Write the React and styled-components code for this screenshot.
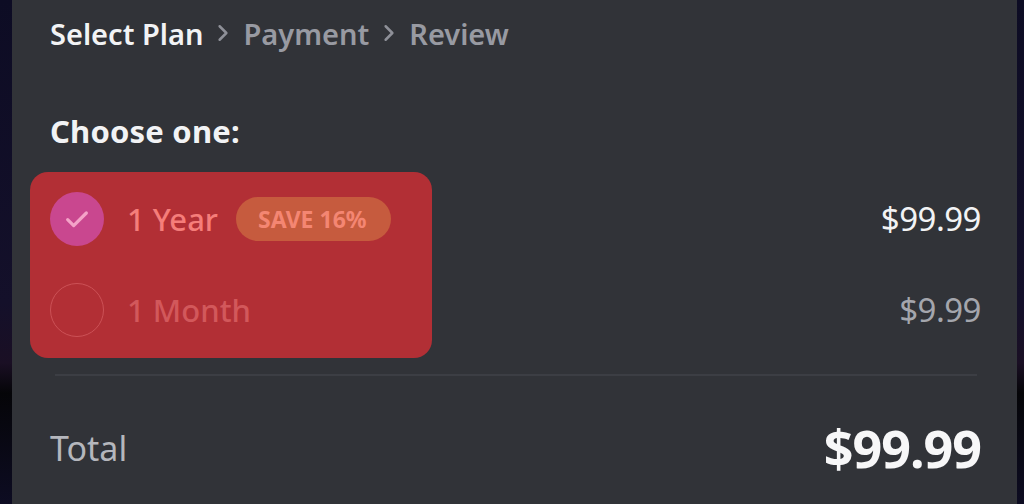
import React, { useState } from 'react';
import styled, { createGlobalStyle } from 'styled-components';

const GlobalStyle = createGlobalStyle`
  html, body {
    margin: 0;
    padding: 0;
    background: #0b0a1c;
  }
  body {
    font-family: 'Noto Sans', 'Open Sans', sans-serif;
  }
`

const Backdrop = styled.div`
  width: 1024px;
  height: 504px;
  display: flex;
  background: linear-gradient(180deg, #0d0c24 0%, #14102a 60%, #1a0f24 72%, #050508 78%, #0d0c22 100%);
  overflow: hidden;
`

const Panel = styled.section`
  width: 1005px;
  margin-left: 12px;
  background: #313338;
  padding: 13px 36px 0 38px;
  box-sizing: border-box;
  display: flex;
  flex-direction: column;
`

const Crumbs = styled.nav`
  display: flex;
  align-items: center;
  gap: 11px;
  height: 40px;
  font-size: 29px;
  font-weight: 600;
`

const Crumb = styled.span`
  color: ${p => (p.active ? '#f2f3f5' : '#989aa2')};
`

const Chevron = styled.svg`
  width: 18px;
  height: 18px;
`

const Heading = styled.h2`
  margin: 60px 0 0 0;
  font-size: 31px;
  font-weight: 700;
  color: #f2f3f5;
  line-height: 36px;
  letter-spacing: 0.2px;
`

const Options = styled.div`
  display: flex;
  flex-direction: column;
  margin-top: 24px;
  position: relative;
`

const Highlight = styled.div`
  position: absolute;
  left: -20px;
  top: -1px;
  width: 402px;
  height: 186px;
  border-radius: 18px;
  background: #b22f35;
  pointer-events: none;
`

const Option = styled.label`
  position: relative;
  display: flex;
  align-items: center;
  height: 91px;
  cursor: pointer;
`

const Radio = styled.span`
  width: 54px;
  height: 54px;
  border-radius: 50%;
  box-sizing: border-box;
  display: flex;
  align-items: center;
  justify-content: center;
  background: ${p => (p.checked ? '#c9478f' : 'transparent')};
  border: ${p => (p.checked ? 'none' : '1.5px solid #cc5156')};
`

const Term = styled.span`
  margin-left: 23px;
  font-size: 31px;
  font-weight: 500;
  color: ${p => (p.checked ? '#f57d7a' : '#d2585b')};
`

const Badge = styled.span`
  margin-left: 18px;
  height: 44px;
  padding: 0 24px 0 22px;
  border-radius: 22px;
  background: #c65b3e;
  color: #f48672;
  font-size: 23px;
  font-weight: 700;
  display: flex;
  align-items: center;
`

const Price = styled.span`
  margin-left: auto;
  font-size: 33px;
  font-weight: 400;
  letter-spacing: -0.5px;
  color: ${p => (p.checked ? '#f2f3f5' : '#a4a6ad')};
`

const Divider = styled.hr`
  margin: 19px 4px 0 5px;
  border: none;
  height: 2px;
  background: #3c3e44;
`

const TotalRow = styled.div`
  display: flex;
  align-items: center;
  justify-content: space-between;
  margin-top: 36px;
`

const TotalLabel = styled.span`
  font-size: 34px;
  color: #b5b7bd;
`

const TotalPrice = styled.span`
  font-size: 52px;
  font-weight: 700;
  letter-spacing: -1px;
  color: #f7f7f8;
`

const plans = [
  { id: 'year', term: '1 Year', badge: 'SAVE 16%', price: '$99.99' },
  { id: 'month', term: '1 Month', price: '$9.99' },
]

const Arrow = () => (
  <Chevron viewBox="0 0 16 16">
    <path d="M5 2 11 8l-6 6" fill="none" stroke="#8e9098" strokeWidth="2.2" strokeLinecap="round" strokeLinejoin="round" />
  </Chevron>
)

const App = () => {
  const [plan, setPlan] = useState('year');
  const current = plans.find(p => p.id === plan);

  return (
    <Backdrop>
      <GlobalStyle />
      <Panel>
        <Crumbs>
          <Crumb active>Select Plan</Crumb>
          <Arrow />
          <Crumb>Payment</Crumb>
          <Arrow />
          <Crumb>Review</Crumb>
        </Crumbs>
        <Heading>Choose one:</Heading>
        <Options>
          <Highlight />
          {plans.map(p => {
            const checked = p.id === plan;
            return (
              <Option key={p.id} onClick={() => setPlan(p.id)}>
                <Radio checked={checked}>
                  {checked && (
                    <svg width="32" height="32" viewBox="0 0 24 24">
                      <path d="M5 12.5l4.5 4.5L19 7.5" fill="none" stroke="#f4a3c8" strokeWidth="2.4" strokeLinecap="round" strokeLinejoin="round" />
                    </svg>
                  )}
                </Radio>
                <Term checked={checked}>{p.term}</Term>
                {p.badge && <Badge>{p.badge}</Badge>}
                <Price checked={checked}>{p.price}</Price>
              </Option>
            )
          })}
        </Options>
        <Divider />
        <TotalRow>
          <TotalLabel>Total</TotalLabel>
          <TotalPrice>{current.price}</TotalPrice>
        </TotalRow>
      </Panel>
    </Backdrop>
  )
}

export default App;
